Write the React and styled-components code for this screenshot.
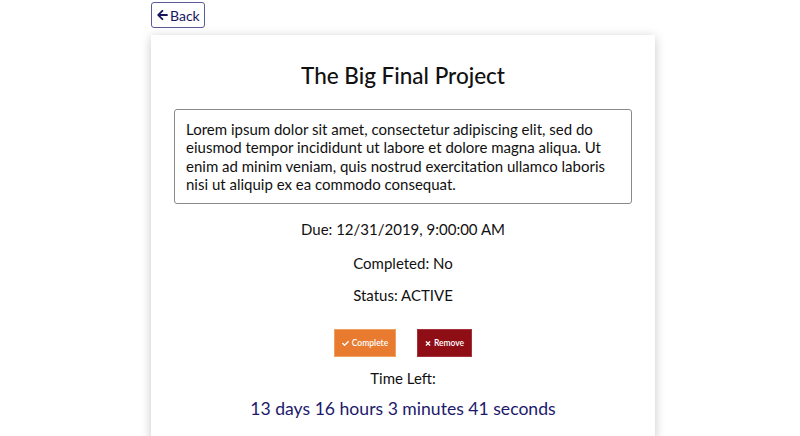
import React from "react";
import styled, { createGlobalStyle } from "styled-components";

const Global = createGlobalStyle`
  html, body { margin: 0; padding: 0; background: #fff; }
  body { font-family: Lato, "Open Sans", sans-serif; color: #111; }
  svg { flex-shrink: 0; }
`;

const Page = styled.div`
  width: 504px;
  margin-left: 151px;
  padding-top: 2px;
  display: flex;
  flex-direction: column;
  align-items: flex-start;
`;

const BackButton = styled.button`
  display: flex;
  align-items: center;
  gap: 2px;
  height: 26px;
  padding: 0 4px 0 5px;
  box-sizing: border-box;
  border: 1px solid #5d5b97;
  border-radius: 3px;
  background: #fff;
  color: #17165e;
  font-family: Lato, sans-serif;
  font-size: 14px;
  cursor: pointer;
`;

const Card = styled.div`
  margin-top: 7px;
  width: 504px;
  box-sizing: border-box;
  padding: 29px 23px 20px;
  background: #fff;
  box-shadow: 0 2px 10px rgba(0, 0, 0, 0.22);
  display: flex;
  flex-direction: column;
  align-items: center;
`;

const Title = styled.h1`
  margin: 0;
  font-size: 22.5px;
  font-weight: 500;
  line-height: 24px;
  color: #111;
`;

const Description = styled.div`
  margin-top: 21px;
  width: 100%;
  box-sizing: border-box;
  border: 1px solid #8a8a8a;
  border-radius: 3px;
  padding: 10px 11px;
  font-size: 15px;
  line-height: 18.3px;
  color: #111;
`;

const Info = styled.p`
  margin: ${(p) => p.$top}px 0 0;
  font-size: 15px;
  line-height: 20px;
`;

const Actions = styled.div`
  margin-top: 24px;
  display: flex;
  gap: 21px;
`;

const ActionButton = styled.button`
  height: 28px;
  width: ${(p) => p.$w}px;
  border: 1px solid ${(p) => p.$border};
  background: ${(p) => p.$bg};
  color: #fff;
  font-family: Lato, sans-serif;
  font-size: 8.5px;
  font-weight: 600;
  display: flex;
  align-items: center;
  justify-content: center;
  gap: 3px;
  padding: 0;
  cursor: pointer;
`;

const Countdown = styled.div`
  margin-top: 10px;
  font-size: 17.6px;
  line-height: 22px;
  color: #1c1a6b;
`;

const ArrowLeft = () => (
  <svg width="11" height="12" viewBox="0 0 448 512" fill="currentColor">
    <path d="M257.5 445.1l-22.2 22.2c-9.4 9.4-24.6 9.4-33.9 0L7 273c-9.4-9.4-9.4-24.6 0-33.9L201.4 44.7c9.4-9.4 24.6-9.4 33.9 0l22.2 22.2c9.5 9.5 9.3 25-.4 34.3L136.6 216H424c13.3 0 24 10.7 24 24v32c0 13.3-10.7 24-24 24H136.6l120.5 114.8c9.8 9.3 10 24.8.4 34.3z" />
  </svg>
);

const Check = () => (
  <svg width="7" height="7" viewBox="0 0 512 512" fill="currentColor">
    <path d="M173.9 439.4l-166.4-166.4c-10-10-10-26.2 0-36.2l36.2-36.2c10-10 26.2-10 36.2 0L192 312.7 432.1 72.6c10-10 26.2-10 36.2 0l36.2 36.2c10 10 10 26.2 0 36.2L210.1 439.4c-10 10-26.2 10-36.2 0z" />
  </svg>
);

const Times = () => (
  <svg width="6" height="7" viewBox="0 0 352 512" fill="currentColor">
    <path d="M242.7 256l100.1-100.1c12.3-12.3 12.3-32.2 0-44.5l-22.2-22.2c-12.3-12.3-32.2-12.3-44.5 0L176 189.3 75.9 89.2c-12.3-12.3-32.2-12.3-44.5 0L9.2 111.4c-12.3 12.3-12.3 32.2 0 44.5L109.3 256 9.2 356.1c-12.3 12.3-12.3 32.2 0 44.5l22.2 22.2c12.3 12.3 32.2 12.3 44.5 0L176 322.7l100.1 100.1c12.3 12.3 32.2 12.3 44.5 0l22.2-22.2c12.3-12.3 12.3-32.2 0-44.5L242.7 256z" />
  </svg>
);

export default function App() {
  return (
    <>
      <Global />
      <Page>
        <BackButton>
          <ArrowLeft />
          Back
        </BackButton>
        <Card>
          <Title>The Big Final Project</Title>
          <Description>
            Lorem ipsum dolor sit amet, consectetur adipiscing elit, sed do
            eiusmod tempor incididunt ut labore et dolore magna aliqua. Ut enim
            ad minim veniam, quis nostrud exercitation ullamco laboris nisi ut
            aliquip ex ea commodo consequat.
          </Description>
          <Info $top={15}>Due: 12/31/2019, 9:00:00 AM</Info>
          <Info $top={14}>Completed: No</Info>
          <Info $top={12}>Status: ACTIVE</Info>
          <Actions>
            <ActionButton $w={62} $bg="#e87b30" $border="#f0a060">
              <Check />
              Complete
            </ActionButton>
            <ActionButton $w={55} $bg="#8f0e16" $border="#a3323a">
              <Times />
              Remove
            </ActionButton>
          </Actions>
          <Info $top={11}>Time Left:</Info>
          <Countdown>13 days 16 hours 3 minutes 41 seconds</Countdown>
        </Card>
      </Page>
    </>
  );
}
